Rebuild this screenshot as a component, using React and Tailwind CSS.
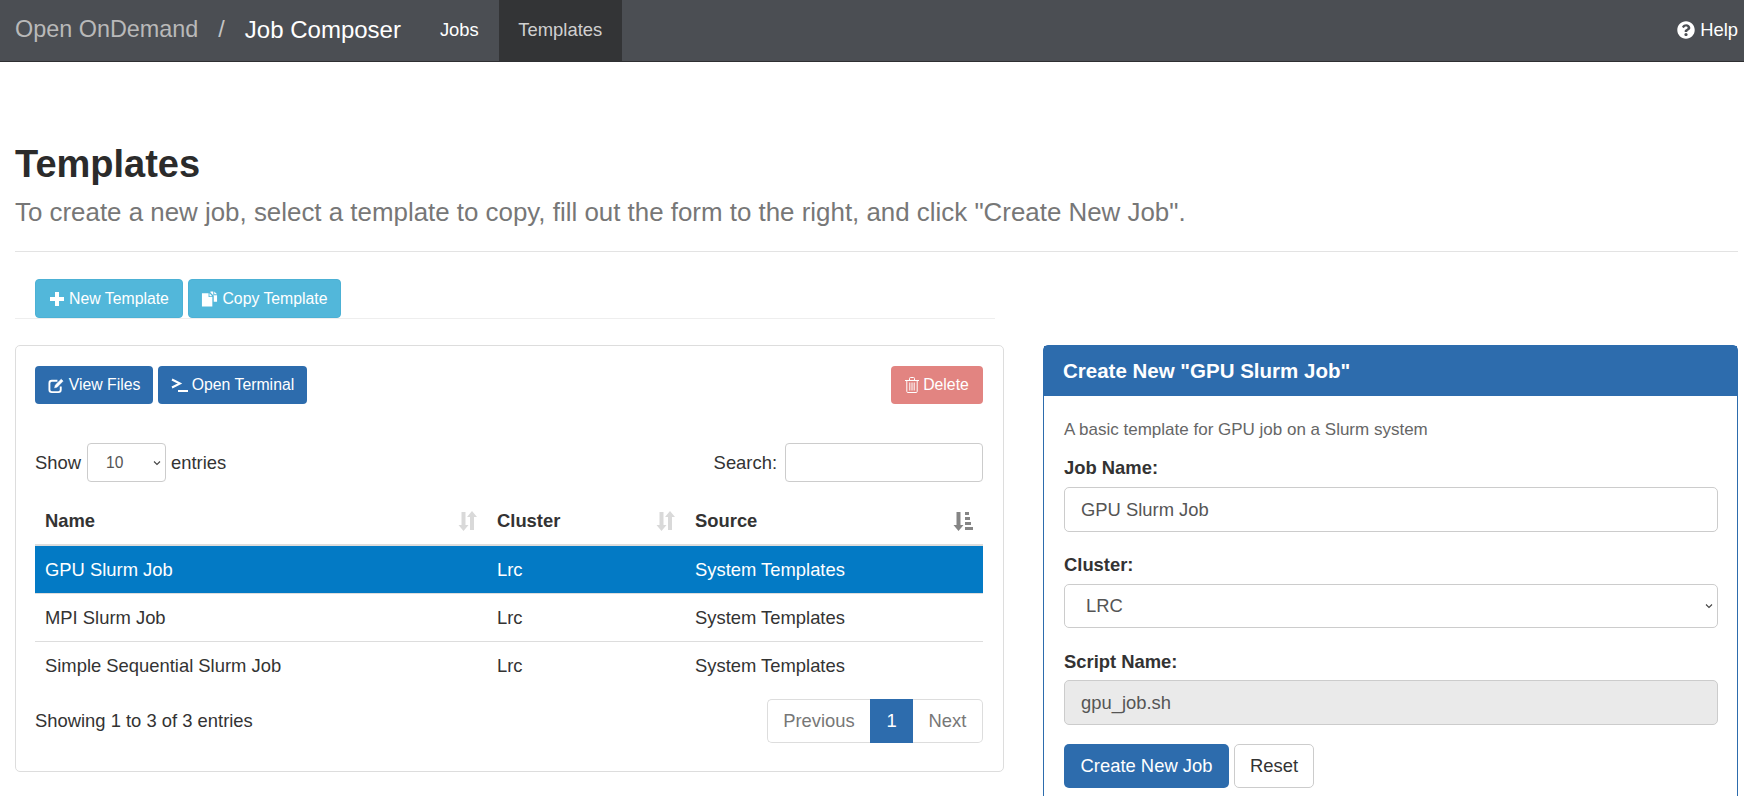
import React from "react";
import { FaQuestionCircle } from "react-icons/fa";

const PlusIcon = () => (
  <svg viewBox="0 0 16 16" className="w-[16px] h-[16px] fill-current shrink-0">
    <path d="M6 1h4v5h5v4h-5v5H6v-5H1V6h5z" />
  </svg>
);
const CopyIcon = () => (
  <svg viewBox="0 0 18 18" className="w-[17px] h-[18px] fill-current shrink-0">
    <path d="M1 3h7v4h4v10H1z" />
    <path d="M9 3l3 3H9z" />
    <path d="M10 1l3 0v4h4v7h-3.500V5.500L10 2z" />
    <path d="M14 1l3 3h-3z" />
  </svg>
);
const EditIcon = () => (
  <svg viewBox="0 0 18 18" className="w-[17px] h-[17px] shrink-0" fill="none" stroke="currentColor">
    <path d="M13.500 10v3.500a2.500 2.500 0 0 1-2.500 2.500H4a2.500 2.500 0 0 1-2.500-2.500V6.500A2.500 2.500 0 0 1 4 4h6" strokeWidth="2" />
    <path d="M7 11.500l.8-3L14 2.300 16 4.300 9.800 10.700z" fill="currentColor" strokeWidth="0.6" />
  </svg>
);
const TermIcon = () => (
  <svg viewBox="0 0 17 14" className="w-[17px] h-[14px] shrink-0" fill="none" stroke="currentColor">
    <path d="M1 1.500 L9 5.500 L1 9.500" strokeWidth="2" />
    <path d="M7 13h10" strokeWidth="2" />
  </svg>
);
const TrashIcon = () => (
  <svg viewBox="0 0 14 16" className="w-[14px] h-[16px] shrink-0" fill="none" stroke="currentColor" strokeWidth="1">
    <path d="M0 3.500h14M4.500 3.500V1.500a1 1 0 0 1 1-1h3a1 1 0 0 1 1 1v2" />
    <path d="M1.800 3.500v11a1 1 0 0 0 1 1h8.400a1 1 0 0 0 1-1v-11M4.800 5.500v8M7 5.500v8M9.200 5.500v8" />
  </svg>
);
const SortBoth = () => (
  <svg viewBox="0 0 19 20" className="w-[19px] h-[20px] fill-[#d9d9d9] shrink-0">
    <path d="M3.500 1h4v13h3L5.500 20 0.500 14h3z" />
    <path d="M14 0l5 6h-3v13h-4V6H9z" />
  </svg>
);
const SortAmount = () => (
  <svg viewBox="0 0 20 20" className="w-[20px] h-[20px] fill-[#858585] shrink-0">
    <path d="M3.500 1h4v13h3L5.500 20 0.500 14h3z" />
    <path d="M12 1h4v3h-4zM12 6h5v3h-5zM12 11h6v3h-6zM12 16h8v3h-8z" />
  </svg>
);
const Chevron = ({ className }) => (
  <svg viewBox="0 0 8 6" className={className} fill="none" stroke="#444" strokeWidth="1.100">
    <path d="M1 1.500 L4 4.500 L7 1.500" />
  </svg>
);

const rows = [
  { name: "GPU Slurm Job", selected: true },
  { name: "MPI Slurm Job" },
  { name: "Simple Sequential Slurm Job", last: true },
];

const smallBtn = "h-[38px] flex items-center justify-center gap-[4px] rounded-[4px] text-white text-[15.8px] leading-none";

export default function App() {
  return (
    <div className="h-[796px] overflow-hidden bg-white text-[#333] text-[18.4px] font-['Liberation_Sans',Arial,sans-serif]">
      <nav className="h-[62px] flex items-stretch bg-[#4b4e53] border-b border-[#2e2f32]">
        <div className="flex items-center pl-[15px] pr-[19px] pb-[2px] text-[23.4px]">
          <span className="text-[#b9b9b9]">Open OnDemand</span>
          <span className="text-[#c4c4c4] ml-[20px] mr-[20px]">/</span>
          <span className="text-white text-[24px]">Job Composer</span>
        </div>
        <div className="flex items-center px-[20px] pb-[2px] text-white">Jobs</div>
        <div className="flex items-center w-[123px] justify-center pb-[2px] bg-[#333436] text-[#d0d0d0]">Templates</div>
        <div className="ml-auto flex items-center gap-[5px] pr-[6px] pb-[2px] text-white">
          <FaQuestionCircle className="w-[18px] h-[18px]" />
          <span>Help</span>
        </div>
      </nav>

      <div className="pl-[15px] pr-[6px]">
        <h1 className="mt-[82px] h-[40px] leading-[40px] text-[38px] font-bold text-[#2b2b2b]">Templates</h1>
        <p className="mt-[13px] h-[30px] leading-[30px] text-[25.9px] text-[#777]">
          To create a new job, select a template to copy, fill out the form to the right, and click "Create New Job".
        </p>
        <div className="mt-[24px] border-b border-[#e3e3e3]"></div>

        <div className="mt-[27px] w-[980px] pl-[20px] flex gap-[5px] border-b border-[#eeeeee]">
          <button className={`${smallBtn} !h-[39px] w-[148px] bg-[#52b7da] border border-[#4cb1d5]`}>
            <PlusIcon /> New Template
          </button>
          <button className={`${smallBtn} !h-[39px] w-[153px] bg-[#52b7da] border border-[#4cb1d5]`}>
            <CopyIcon /> Copy Template
          </button>
        </div>

        <div className="mt-[26px] flex gap-[39px] items-start">
          <section className="w-[989px] shrink-0 h-[427px] border border-[#dddddd] rounded-[5px] pl-[19px] pr-[20px] pt-[20px]">
            <div className="flex gap-[5px]">
              <button className={`${smallBtn} w-[118px] bg-[#2d6cad]`}>
                <EditIcon /> View Files
              </button>
              <button className={`${smallBtn} w-[149px] bg-[#2d6cad]`}>
                <TermIcon /> Open Terminal
              </button>
              <button className={`${smallBtn} ml-auto w-[92px] bg-[#e28481]`}>
                <TrashIcon /> Delete
              </button>
            </div>

            <div className="mt-[39px] flex items-center justify-between h-[39px]">
              <div className="flex items-center gap-[5px]">
                <span>Show</span>
                <div className="relative w-[79px] h-[39px] ml-[1px]">
                  <select className="appearance-none w-full h-full border border-[#cccccc] rounded-[4px] pl-[18px] text-[15.6px] text-[#555] bg-white">
                    <option>10</option>
                  </select>
                  <Chevron className="absolute right-[5px] top-[17px] w-[8px] h-[6px]" />
                </div>
                <span>entries</span>
              </div>
              <div className="flex items-center gap-[8px]">
                <span>Search:</span>
                <input className="w-[198px] h-[39px] border border-[#cccccc] rounded-[4px] bg-white" />
              </div>
            </div>

            <table className="mt-[16px] w-[948px] table-fixed border-separate border-spacing-0">
              <colgroup>
                <col className="w-[452px]" />
                <col className="w-[198px]" />
                <col className="w-[298px]" />
              </colgroup>
              <thead>
                <tr>
                  <th className="h-[48px] px-[10px] border-b-2 border-[#dddddd] text-left font-bold">
                    <div className="flex items-center justify-between">Name <SortBoth /></div>
                  </th>
                  <th className="h-[48px] px-[10px] border-b-2 border-[#dddddd] text-left font-bold">
                    <div className="flex items-center justify-between">Cluster <SortBoth /></div>
                  </th>
                  <th className="h-[48px] px-[10px] border-b-2 border-[#dddddd] text-left font-bold">
                    <div className="flex items-center justify-between">Source <SortAmount /></div>
                  </th>
                </tr>
              </thead>
              <tbody>
                {rows.map((r) => (
                  <tr key={r.name} className={r.selected ? "bg-[#037ac5] text-white" : ""}>
                    <td className={`h-[48px] px-[10px] ${r.last ? "" : "border-b border-[#dddddd]"}`}>{r.name}</td>
                    <td className={`h-[48px] px-[10px] ${r.last ? "" : "border-b border-[#dddddd]"}`}>Lrc</td>
                    <td className={`h-[48px] px-[10px] ${r.last ? "" : "border-b border-[#dddddd]"}`}>System Templates</td>
                  </tr>
                ))}
              </tbody>
            </table>

            <div className="mt-[9px] flex items-center justify-between">
              <span>Showing 1 to 3 of 3 entries</span>
              <div className="flex h-[44px] w-[216px]">
                <div className="w-[103px] flex items-center justify-center border border-r-0 border-[#dddddd] rounded-l-[5px] text-[#777]">Previous</div>
                <div className="w-[43px] flex items-center justify-center bg-[#2d6cad] text-white">1</div>
                <div className="w-[70px] flex items-center justify-center border border-l-0 border-[#dddddd] rounded-r-[5px] text-[#777]">Next</div>
              </div>
            </div>
          </section>

          <section className="flex-1 min-w-0 border border-[#2d6cad] rounded-t-[5px] pb-[30px]">
            <div className="h-[50px] flex items-center bg-[#2d6cad] px-[19px] text-white text-[20.5px] font-bold">
              Create New "GPU Slurm Job"
            </div>
            <div className="pl-[20px] pr-[19px]">
              <p className="mt-[22px] leading-[24px] text-[17px] text-[#666]">A basic template for GPU job on a Slurm system</p>
              <label className="block mt-[14px] leading-[24px] font-bold">Job Name:</label>
              <input readOnly value="GPU Slurm Job" className="block mt-[7px] w-full h-[45px] border border-[#cccccc] rounded-[5px] px-[16px] text-[#555]" />
              <label className="block mt-[21px] leading-[24px] font-bold">Cluster:</label>
              <div className="relative mt-[7px] h-[44px]">
                <select className="appearance-none w-full h-full border border-[#cccccc] rounded-[5px] pl-[21px] text-[#555] bg-white">
                  <option>LRC</option>
                </select>
                <Chevron className="absolute right-[5px] top-[19px] w-[8px] h-[6px]" />
              </div>
              <label className="block mt-[22px] leading-[24px] font-bold">Script Name:</label>
              <input readOnly disabled value="gpu_job.sh" className="block mt-[6px] w-full h-[45px] border border-[#cccccc] rounded-[5px] px-[16px] text-[#555] bg-[#eaeaea]" />
              <div className="mt-[19px] flex gap-[5px]">
                <button className="w-[165px] h-[44px] rounded-[5px] bg-[#2d6cad] text-white">Create New Job</button>
                <button className="w-[80px] h-[44px] rounded-[5px] border border-[#cccccc] text-[#333]">Reset</button>
              </div>
            </div>
          </section>
        </div>
      </div>
    </div>
  );
}
